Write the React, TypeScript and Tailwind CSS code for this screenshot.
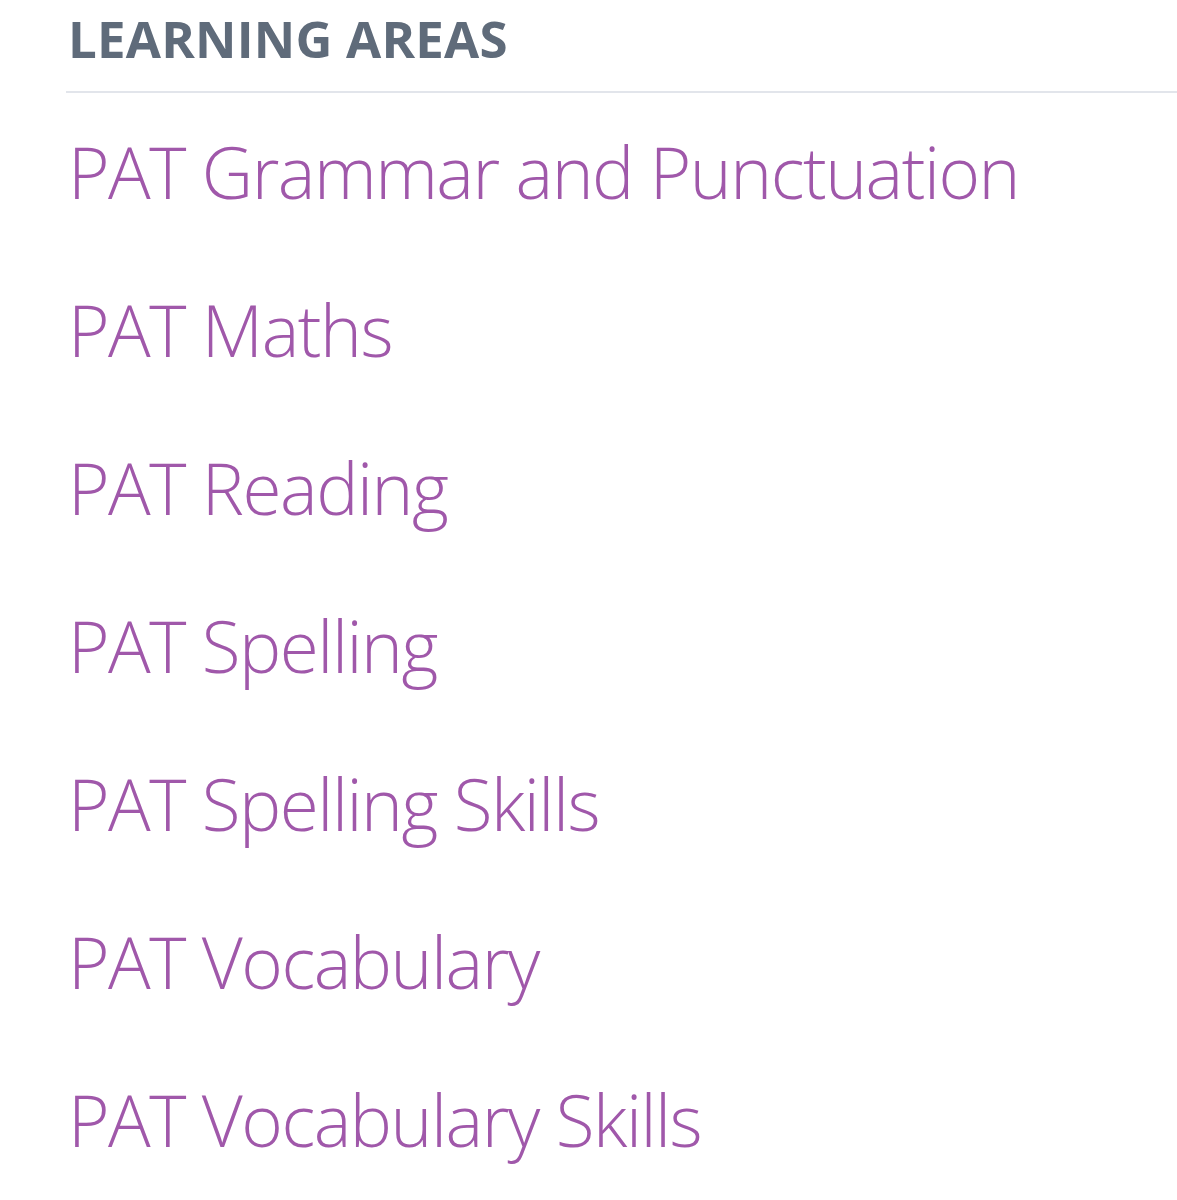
const areas = [
  "PAT Grammar and Punctuation",
  "PAT Maths",
  "PAT Reading",
  "PAT Spelling",
  "PAT Spelling Skills",
  "PAT Vocabulary",
  "PAT Vocabulary Skills",
];

export default function App() {
  return (
    <div className="min-h-[1200px] bg-white pl-[66px] font-['Open_Sans',sans-serif]">
      <h2 className="pl-[2px] pt-[6px] text-[51px] font-bold leading-[64px] tracking-[0.2px] text-[#5f6b7a]">
        LEARNING AREAS
      </h2>
      <div className="mt-[21px] h-[2px] bg-[#e2e5eb]" />
      <ul>
        {areas.map((a) => (
          <li key={a}>
            <a href="#" className="block pl-[2px] text-[71px] font-light leading-[158px] tracking-[-1.5px] text-[#a058aa]">
              {a}
            </a>
          </li>
        ))}
      </ul>
    </div>
  );
}
